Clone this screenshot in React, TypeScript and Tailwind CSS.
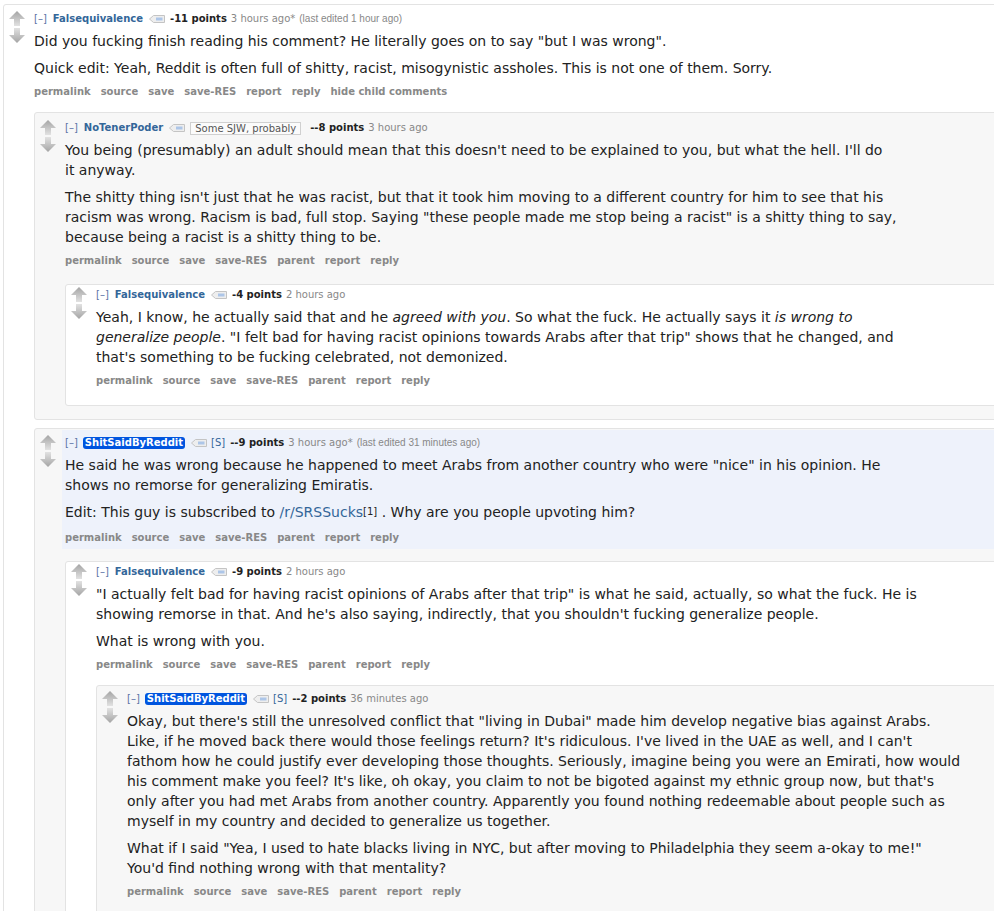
import React from 'react';

// old reddit style comment thread (RES comment boxes)

const UpArrow = () => (
  <svg width="16" height="15" viewBox="0 0 16 15">
    <defs>
      <linearGradient id="upg" x1="0" y1="0" x2="0" y2="1">
        <stop offset="0" stopColor="#a4a4a4" />
        <stop offset="1" stopColor="#e2e2e2" />
      </linearGradient>
    </defs>
    <path d="M8 0 L16 8 H11 V15 H5 V8 H0 Z" fill="url(#upg)" />
  </svg>
);

const DownArrow = () => (
  <svg width="16" height="15" viewBox="0 0 16 15">
    <defs>
      <linearGradient id="dng" x1="0" y1="0" x2="0" y2="1">
        <stop offset="0" stopColor="#e2e2e2" />
        <stop offset="1" stopColor="#a4a4a4" />
      </linearGradient>
    </defs>
    <path d="M5 0 H11 V7 H16 L8 15 L0 7 H5 Z" fill="url(#dng)" />
  </svg>
);

const TagIcon = () => (
  <svg width="16" height="8" viewBox="0 0 16 8">
    <path d="M0.5 4 L4.5 0.5 H15.5 V7.5 H4.5 Z" fill="#eeeeee" stroke="#c4c4c4" />
    <rect x="7" y="2.5" width="6.5" height="3" fill="#adc6e8" />
  </svg>
);

type TagProps = {
  author: string;
  submitter?: boolean;
  userTag?: string;
  points: string;
  time: string;
  edited?: string;
};

const Tagline = ({ author, submitter, userTag, points, time, edited, pt }: TagProps & { pt: string }) => (
  <div className={`flex items-center h-[16px] ${pt} text-[10px] leading-[16px] text-[#888] whitespace-nowrap`}>
    <span className="text-[#5b72a6]">[–]</span>
    {submitter ? (
      <span className="ml-[5px] bg-[#0055df] text-white font-bold rounded-[3px] px-[2px] leading-[12px]">
        {author}
      </span>
    ) : (
      <span className="ml-[6px] font-bold text-[#369]">{author}</span>
    )}
    <span className="ml-[6px] flex">
      <TagIcon />
    </span>
    {userTag && (
      <span className="ml-[5px] border border-[#d0d0d0] bg-[#fbfbfb] text-[#555] px-[4px] leading-[11px]">
        {userTag}
      </span>
    )}
    {submitter && <span className="ml-[4px] text-[#369]">[S]</span>}
    <span className={`${userTag ? 'ml-[9px]' : 'ml-[5px]'} font-bold text-[#222]`}>{points}</span>
    <span className="ml-[4px]">{time}</span>
    {edited && <span className="ml-[4px] font-['Liberation_Sans',Arial,sans-serif]">{edited}</span>}
  </div>
);

const Buttons = ({ items, mt }: { items: string[]; mt: string }) => (
  <div className={`${mt} flex gap-[10px] h-[14px] text-[10px] leading-[14px] font-bold text-[#888] whitespace-nowrap`}>
    {items.map((b) => (
      <span key={b}>{b}</span>
    ))}
  </div>
);

type CommentProps = {
  tag: TagProps;
  body: React.ReactNode;
  buttons: string[];
  box: string;
  tagPt?: string;
  btnMt?: string;
  childMt?: string;
  highlight?: boolean;
  children?: React.ReactNode;
};

const Comment = ({ tag, body, buttons, box, tagPt = 'pt-0', btnMt = 'mt-[7px]', childMt, highlight, children }: CommentProps) => (
  <div className={`border border-[#e3e3e3] rounded-[3px] ${box}`}>
    <div className="flex">
      <div className={`ml-[5px] w-[16px] shrink-0 flex flex-col gap-[2px] ${highlight ? 'mt-[5px]' : ''}`}>
        <UpArrow />
        <DownArrow />
      </div>
      <div className={`flex-1 ${highlight ? 'ml-[6px] pl-[3px] pt-[5px] pb-[4px] bg-[#eef2fb]' : 'ml-[9px]'}`}>
        <Tagline {...tag} pt={tagPt} />
        <div className="mt-[4px] text-[14px] leading-[20px] text-[#222] whitespace-nowrap">{body}</div>
        <Buttons items={buttons} mt={btnMt} />
      </div>
    </div>
    {children && <div className={`ml-[30px] ${childMt}`}>{children}</div>}
  </div>
);

const P = ({ children }: { children: React.ReactNode }) => <p className="mb-[7px] last:mb-0">{children}</p>;

const replyBtns = ['permalink', 'source', 'save', 'save-RES', 'parent', 'report', 'reply'];

export default function App() {
  return (
    <div className="w-[994px] h-[911px] overflow-hidden bg-white font-['DejaVu_Sans',Verdana,sans-serif]">
      <div className="ml-[3px] mt-[4px] w-[1200px]">
        <Comment
          box="bg-white pt-[6px] pb-[40px]"
          childMt="mt-[13px]"
          tag={{
            author: 'Falsequivalence',
            points: '-11 points',
            time: '3 hours ago*',
            edited: '(last edited 1 hour ago)',
          }}
          body={
            <>
              <P>Did you fucking finish reading his comment? He literally goes on to say "but I was wrong".</P>
              <P>Quick edit: Yeah, Reddit is often full of shitty, racist, misogynistic assholes. This is not one of them. Sorry.</P>
            </>
          }
          buttons={['permalink', 'source', 'save', 'save-RES', 'report', 'reply', 'hide child comments']}
        >
          <Comment
            box="bg-[#f7f7f7] pt-[7px] pb-[13px]"
            childMt="mt-[16px]"
            tag={{ author: 'NoTenerPoder', userTag: 'Some SJW, probably', points: '--8 points', time: '3 hours ago' }}
            body={
              <>
                <P>
                  You being (presumably) an adult should mean that this doesn't need to be explained to you, but what the hell. I'll do
                  <br />
                  it anyway.
                </P>
                <P>
                  The shitty thing isn't just that he was racist, but that it took him moving to a different country for him to see that his
                  <br />
                  racism was wrong. Racism is bad, full stop. Saying "these people made me stop being a racist" is a shitty thing to say,
                  <br />
                  because being a racist is a shitty thing to be.
                </P>
              </>
            }
            buttons={replyBtns}
          >
            <Comment
              box="bg-white pt-[2px] pb-[17px]"
              tag={{ author: 'Falsequivalence', points: '-4 points', time: '2 hours ago' }}
              body={
                <P>
                  Yeah, I know, he actually said that and he <em>agreed with you</em>. So what the fuck. He actually says it <em>is wrong to</em>
                  <br />
                  <em>generalize people</em>. "I felt bad for having racist opinions towards Arabs after that trip" shows that he changed, and
                  <br />
                  that's something to be fucking celebrated, not demonized.
                </P>
              }
              buttons={replyBtns}
            />
          </Comment>

          <div className="mt-[8px]">
            <Comment
              box="bg-[#f7f7f7] pt-[1px] pb-[40px]"
              childMt="mt-[12px]"
              btnMt="mt-[9px]"
              highlight
              tag={{
                author: 'ShitSaidByReddit',
                submitter: true,
                points: '--9 points',
                time: '3 hours ago*',
                edited: '(last edited 31 minutes ago)',
              }}
              body={
                <>
                  <P>
                    He said he was wrong because he happened to meet Arabs from another country who were "nice" in his opinion. He
                    <br />
                    shows no remorse for generalizing Emiratis.
                  </P>
                  <P>
                    Edit: This guy is subscribed to <span className="text-[#369]">/r/SRSSucks</span>
                    <sup className="text-[10px] relative -top-[2px]">[1]</sup> . Why are you people upvoting him?
                  </P>
                </>
              }
              buttons={replyBtns}
            >
              <Comment
                box="bg-white pt-[2px] pb-[30px]"
                childMt="mt-[13px]"
                tag={{ author: 'Falsequivalence', points: '-9 points', time: '2 hours ago' }}
                body={
                  <>
                    <P>
                      "I actually felt bad for having racist opinions of Arabs after that trip" is what he said, actually, so what the fuck. He is
                      <br />
                      showing remorse in that. And he's also saying, indirectly, that you shouldn't fucking generalize people.
                    </P>
                    <P>What is wrong with you.</P>
                  </>
                }
                buttons={replyBtns}
              >
                <Comment
                  box="bg-[#f7f7f7] pt-[5px] pb-[30px]"
                  tag={{ author: 'ShitSaidByReddit', submitter: true, points: '--2 points', time: '36 minutes ago' }}
                  body={
                    <>
                      <P>
                        Okay, but there's still the unresolved conflict that "living in Dubai" made him develop negative bias against Arabs.
                        <br />
                        Like, if he moved back there would those feelings return? It's ridiculous. I've lived in the UAE as well, and I can't
                        <br />
                        fathom how he could justify ever developing those thoughts. Seriously, imagine being you were an Emirati, how would
                        <br />
                        his comment make you feel? It's like, oh okay, you claim to not be bigoted against my ethnic group now, but that's
                        <br />
                        only after you had met Arabs from another country. Apparently you found nothing redeemable about people such as
                        <br />
                        myself in my country and decided to generalize us together.
                      </P>
                      <P>
                        What if I said "Yea, I used to hate blacks living in NYC, but after moving to Philadelphia they seem a-okay to me!"
                        <br />
                        You'd find nothing wrong with that mentality?
                      </P>
                    </>
                  }
                  buttons={replyBtns}
                />
              </Comment>
            </Comment>
          </div>
        </Comment>
      </div>
    </div>
  );
}
